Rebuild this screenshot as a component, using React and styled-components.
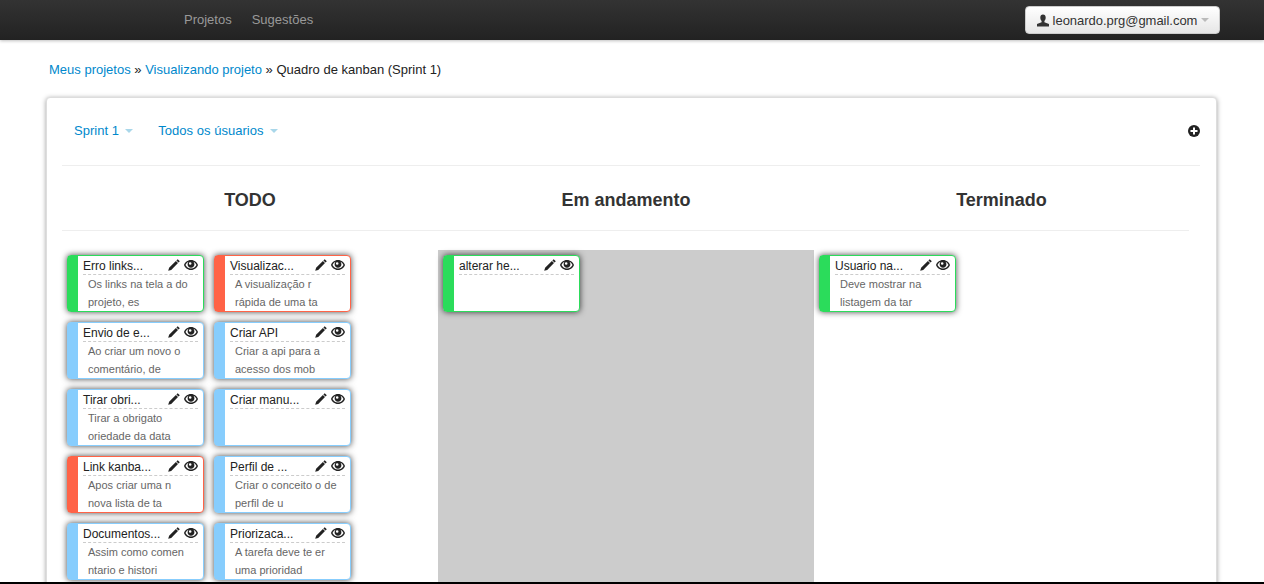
import React from 'react';
import styled, { createGlobalStyle } from 'styled-components';

const GlobalStyle = createGlobalStyle`
  html, body {
    margin: 0;
    height: 584px;
    overflow: hidden;
    background: #fff;
    font-family: "Helvetica Neue", "Liberation Sans", Arial, sans-serif;
    font-size: 14px;
    color: #333;
  }
`;

const Navbar = styled.header`
  height: 40px;
  display: flex;
  align-items: center;
  justify-content: space-between;
  padding: 0 44px 0 184px;
  background: linear-gradient(#333, #222);
  box-shadow: 0 1px 3px rgba(0, 0, 0, 0.25);
`;

const NavLinks = styled.nav`
  display: flex;
  gap: 20px;
`;

const NavLink = styled.a`
  color: #999;
  font-size: 13px;
  line-height: 20px;
`;

const UserButton = styled.button`
  width: 195px;
  height: 28px;
  display: flex;
  align-items: center;
  justify-content: center;
  gap: 4px;
  padding: 0 0 0 1px;
  border: 1px solid #ccc;
  border-radius: 4px;
  background: linear-gradient(#fff, #e6e6e6);
  color: #333;
  font-family: inherit;
  font-size: 13px;
  letter-spacing: -0.03px;
`;

const Caret = styled.span`
  width: 0;
  height: 0;
  margin-left: ${(p) => p.$gap || 0}px;
  border-left: 4px solid transparent;
  border-right: 4px solid transparent;
  border-top: 4px solid ${(p) => p.$color};
`;

const Breadcrumb = styled.div`
  padding: 20px 0 0 49px;
  height: 37px;
  line-height: 20px;
  font-size: 13px;
  color: #222;
`;

const Crumb = styled.a`
  color: #0088cc;
`;

const Panel = styled.main`
  margin: 0 47px 0 46px;
  height: 520px;
  padding: 0 16px 0 15px;
  background: #fff;
  border-radius: 4px;
  border: 1px solid #ddd;
  box-shadow: 0 1px 5px rgba(0, 0, 0, 0.38);
`;

const Toolbar = styled.div`
  height: 65px;
  display: flex;
  align-items: center;
  padding: 0 0 2px 12px;
  gap: 25px;
  border-bottom: 1px solid #eee;
`;

const Filter = styled.a`
  display: flex;
  align-items: center;
  color: #0088cc;
  font-size: 13px;
  letter-spacing: 0.04px;
`;

const AddIcon = styled.svg`
  margin-left: auto;
  width: 12px;
  height: 12px;
`;

const Board = styled.div`
  display: grid;
  grid-template-columns: 376px 376px 375px;
`;

const ColumnTitle = styled.h2`
  margin: 0;
  height: 60px;
  padding-top: 4px;
  display: flex;
  align-items: center;
  justify-content: center;
  border-bottom: 1px solid #eee;
  font-size: 18px;
  font-weight: bold;
  color: #333;
`;

const Column = styled.section`
  margin-top: 19px;
  min-height: 340px;
  display: flex;
  flex-wrap: wrap;
  align-content: flex-start;
  gap: 10px;
  padding: 5px;
  background: ${(p) => (p.$active ? '#cccccc' : 'transparent')};
`;

const Card = styled.article`
  width: 137px;
  height: 57px;
  box-sizing: border-box;
  display: flex;
  border: 1px solid ${(p) => p.$color};
  border-radius: 4px;
  background: #fff;
  box-shadow: 0 0 6px rgba(0, 0, 0, 0.72);
`;

const CardStripe = styled.div`
  width: 10px;
  flex: none;
  background: ${(p) => p.$color};
`;

const CardBody = styled.div`
  flex: 1;
  min-width: 0;
  padding: 0 5px;
`;

const CardHead = styled.div`
  height: 17px;
  padding-top: 1px;
  display: flex;
  align-items: center;
  justify-content: space-between;
  border-bottom: 1px dashed #ccc;
`;

const CardTitle = styled.span`
  font-size: 12px;
  color: #222;
  white-space: nowrap;
`;

const CardIcons = styled.span`
  display: flex;
  align-items: center;
  gap: 4px;
  margin-top: -2px;
`;

const CardText = styled.p`
  margin: 0;
  padding: 0 0 0 5px;
  font-size: 11px;
  line-height: 18px;
  color: #666;
  white-space: nowrap;
  overflow: hidden;
`;

const GREEN = '#2bdc5b';
const RED = '#ff6347';
const BLUE = '#87cdfd';

const todo = [
  { c: GREEN, t: 'Erro links...', d: ['Os links na tela a do', 'projeto, es'] },
  { c: RED, t: 'Visualizac...', d: ['A visualização r', 'rápida de uma ta'] },
  { c: BLUE, t: 'Envio de e...', d: ['Ao criar um novo o', 'comentário, de'] },
  { c: BLUE, t: 'Criar API', d: ['Criar a api para a', 'acesso dos mob'] },
  { c: BLUE, t: 'Tirar obri...', d: ['Tirar a obrigato', 'oriedade da data'] },
  { c: BLUE, t: 'Criar manu...', d: [] },
  { c: RED, t: 'Link kanba...', d: ['Apos criar uma n', 'nova lista de ta'] },
  { c: BLUE, t: 'Perfil de ...', d: ['Criar o conceito o de', 'perfil de u'] },
  { c: BLUE, t: 'Documentos...', d: ['Assim como comen', 'ntario e histori'] },
  { c: BLUE, t: 'Priorizaca...', d: ['A tarefa deve te er', 'uma prioridad'] },
];

const doing = [{ c: GREEN, t: 'alterar he...', d: [] }];
const done = [{ c: GREEN, t: 'Usuario na...', d: ['Deve mostrar na', 'listagem da tar'] }];

const PencilIcon = () => (
  <svg width="12" height="12" viewBox="0 0 12 12">
    <path fill="#222" d="M9.7 0.2 11.8 2.3 10.5 3.6 8.4 1.5Z M7.9 2 10 4.1 3.2 10.9 0.2 11.8 1.1 8.8Z" />
  </svg>
);

const EyeIcon = () => (
  <svg width="14" height="10" viewBox="0 0 14 10">
    <path
      fill="#222"
      fillRule="evenodd"
      d="M7 0C10.6 0 13 2.4 14 5 13 7.6 10.6 10 7 10 3.4 10 1 7.6 0 5 1 2.4 3.4 0 7 0ZM4.6 1.8C3.2 2.4 2.2 3.6 1.5 5 2.4 6.8 4.4 8.6 7 8.6 9.6 8.6 11.6 6.8 12.5 5 11.8 3.6 10.8 2.4 9.4 1.8 10 2.4 10.4 3.3 10.4 4.4 10.4 6.2 8.9 7.7 7 7.7 5.1 7.7 3.6 6.2 3.6 4.4 3.6 3.3 4 2.4 4.6 1.8ZM6.2 2.2A1.3 1.3 0 1 0 6.2 4.8 1.3 1.3 0 1 0 6.2 2.2Z"
    />
  </svg>
);

const UserIcon = () => (
  <svg width="12" height="13" viewBox="0 0 12 13">
    <path fill="#333" d="M6 0.5C7.7 0.5 8.7 1.8 8.7 3.6 8.7 5 8.2 6.2 7.4 7V8.2L12 10V12.5H0V10L4.6 8.2V7C3.8 6.2 3.3 5 3.3 3.6 3.3 1.8 4.3 0.5 6 0.5Z" />
  </svg>
);

const TaskCard = ({ task }) => (
  <Card $color={task.c}>
    <CardStripe $color={task.c} />
    <CardBody>
      <CardHead>
        <CardTitle>{task.t}</CardTitle>
        <CardIcons>
          <PencilIcon />
          <EyeIcon />
        </CardIcons>
      </CardHead>
      {task.d.map((line) => (
        <CardText key={line}>{line}</CardText>
      ))}
    </CardBody>
  </Card>
);

const Footer = styled.div`
  position: fixed;
  left: 0;
  right: 0;
  bottom: 0;
  height: 2px;
  background: #000;
`;

export default function App() {
  return (
    <>
      <GlobalStyle />
      <Navbar>
        <NavLinks>
          <NavLink>Projetos</NavLink>
          <NavLink>Sugestões</NavLink>
        </NavLinks>
        <UserButton>
          <UserIcon />
          leonardo.prg@gmail.com
          <Caret $color="#bbb" />
        </UserButton>
      </Navbar>
      <Breadcrumb>
        <Crumb>Meus projetos</Crumb> » <Crumb>Visualizando projeto</Crumb> » Quadro de kanban (Sprint 1)
      </Breadcrumb>
      <Panel>
        <Toolbar>
          <Filter>
            Sprint 1 <Caret $color="#a9d7ea" $gap={6} />
          </Filter>
          <Filter>
            Todos os úsuarios <Caret $color="#a9d7ea" $gap={6} />
          </Filter>
          <AddIcon viewBox="0 0 12 12">
            <circle cx="6" cy="6" r="6" fill="#222" />
            <path fill="#fff" d="M5 2.5H7V5H9.5V7H7V9.5H5V7H2.5V5H5Z" />
          </AddIcon>
        </Toolbar>
        <Board>
          <div>
            <ColumnTitle>TODO</ColumnTitle>
            <Column>
              {todo.map((task) => (
                <TaskCard key={task.t} task={task} />
              ))}
            </Column>
          </div>
          <div>
            <ColumnTitle>Em andamento</ColumnTitle>
            <Column $active>
              {doing.map((task) => (
                <TaskCard key={task.t} task={task} />
              ))}
            </Column>
          </div>
          <div>
            <ColumnTitle>Terminado</ColumnTitle>
            <Column>
              {done.map((task) => (
                <TaskCard key={task.t} task={task} />
              ))}
            </Column>
          </div>
        </Board>
      </Panel>
      <Footer />
    </>
  );
}
